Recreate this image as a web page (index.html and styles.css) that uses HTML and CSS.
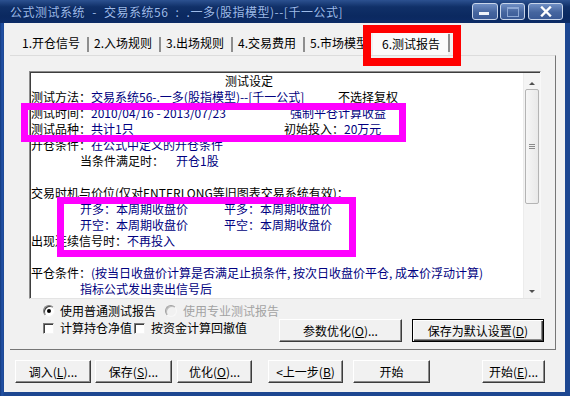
FILE: index.html
```html
<!DOCTYPE html>
<html lang="zh-CN">
<head>
<meta charset="utf-8">
<title>公式测试系统</title>
<link rel="stylesheet" href="styles.css">
</head>
<body>
<div class="window">
  <div class="titlebar">
    <span class="title">公式测试系统 - 交易系统56 : .一多(股指模型)--[千一公式]</span>
    <div class="caption-btns">
      <span class="cbtn min"><span class="min-glyph"></span></span>
      <span class="cbtn max"><span class="max-glyph"></span></span>
      <span class="cbtn close">
        <svg width="12" height="11" viewBox="0 0 12 11"><path d="M2 1.5 L10 9.5 M10 1.5 L2 9.5" stroke="#ffffff" stroke-width="2.4" stroke-linecap="square"/></svg>
      </span>
    </div>
  </div>
  <div class="client">
    <div class="tabs">
      <span class="tab">1.开仓信号</span><span class="sep"></span>
      <span class="tab">2.入场规则</span><span class="sep"></span>
      <span class="tab">3.出场规则</span><span class="sep"></span>
      <span class="tab">4.交易费用</span><span class="sep"></span>
      <span class="tab t5">5.市场模型</span>
      <span class="tab sel">6.测试报告</span><span class="sep sel-sep"></span>
    </div>
    <div class="panel">
      <div class="report">
        <div class="report-text">
          <div class="line"><span class="head">测试设定</span></div>
          <div class="line"><span class="cell w307">测试方法：<span class="v">交易系统56-.一多(股指模型)--[千一公式]</span></span>不选择复权</div>
          <div class="line"><span class="cell w259">测试时间：<span class="v">2010/04/16 - 2013/07/23</span></span><span class="v">强制平仓计算收益</span></div>
          <div class="line"><span class="cell w253">测试品种：<span class="v">共计1只</span></span>初始投入：<span class="v">20万元</span></div>
          <div class="line">开仓条件：<span class="v">在公式中定义的开仓条件</span></div>
          <div class="line indent"><span class="cell w96">当条件满足时：</span><span class="v">开仓1股</span></div>
          <div class="line"></div>
          <div class="line">交易时机与价位(仅对ENTERLONG等旧图表交易系统有效)：</div>
          <div class="line indent v"><span class="cell w144">开多：本周期收盘价</span>平多：本周期收盘价</div>
          <div class="line indent v"><span class="cell w144">开空：本周期收盘价</span>平空：本周期收盘价</div>
          <div class="line">出现连续信号时：<span class="v">不再投入</span></div>
          <div class="line"></div>
          <div class="line">平仓条件：<span class="v">(按当日收盘价计算是否满足止损条件, 按次日收盘价平仓, 成本价浮动计算)</span></div>
          <div class="line indent v">指标公式发出卖出信号后</div>
        </div>
        <div class="vscroll">
          <div class="sb-btn up"><span class="arrow-up"></span></div>
          <div class="thumb"><span class="grip"></span></div>
          <div class="track"></div>
          <div class="sb-btn down"><span class="arrow-down"></span></div>
        </div>
      </div>
      <div class="options">
        <div class="opt-left">
          <div class="opt-row">
            <span class="radio checked"></span><span class="opt-label">使用普通测试报告</span>
            <span class="radio disabled"></span><span class="opt-label dis">使用专业测试报告</span>
          </div>
          <div class="opt-row second">
            <span class="check"></span><span class="opt-label">计算持仓净值</span>
            <span class="check c2"></span><span class="opt-label">按资金计算回撤值</span>
          </div>
        </div>
        <button class="btn b-param">参数优化(<u>O</u>)...</button>
        <button class="btn b-default">保存为默认设置(<u>D</u>)</button>
      </div>
    </div>
    <div class="footer">
      <button class="btn f1">调入(<u>L</u>)...</button>
      <button class="btn f2">保存(<u>S</u>)...</button>
      <button class="btn f3">优化(<u>O</u>)...</button>
      <button class="btn f4">&lt;上一步(<u>B</u>)</button>
      <button class="btn f5">开始</button>
      <button class="btn f6">开始(<u>E</u>)...</button>
    </div>
  </div>
  <div class="mark red"></div>
  <div class="mark pink p1"></div>
  <div class="mark pink p2"></div>
</div>
</body>
</html>
```
FILE: styles.css
```css
* { box-sizing: border-box; }
html, body { margin: 0; padding: 0; }
body {
  width: 570px;
  height: 396px;
  overflow: hidden;
  font-family: "Noto Sans CJK SC", "Noto Sans", sans-serif;
  font-size: 12px;
  color: #000;
  background: #fff;
}

.window {
  position: relative;
  width: 570px;
  height: 396px;
  display: flex;
  flex-direction: column;
  background: linear-gradient(90deg, #163a7c, #2152a8 2px, #1d4791 4px);
}

/* title bar */
.titlebar {
  height: 23px;
  display: flex;
  align-items: flex-start;
  padding-left: 10px;
  background: linear-gradient(#2c5190, #103068 30%, #0b2960 70%, #0c2b66);
  color: #9dbbea;
}
.title {
  flex: 1;
  font-size: 12px;
  line-height: 14px;
  margin-top: 5px;
  white-space: pre;
  letter-spacing: 0.5px;
  word-spacing: 4px;
  text-shadow: 0 0 1px #0a1f4a;
}
.caption-btns {
  display: flex;
  margin-top: 3px;
  margin-right: 7px;
}
.cbtn {
  height: 17px;
  border: 1px solid #c8d5ea;
  border-radius: 3px;
  background: linear-gradient(#6f8ec4, #45659f 55%, #3a5a96);
  display: flex;
  align-items: center;
  justify-content: center;
}
.cbtn.min { width: 26px; align-items: flex-end; padding-bottom: 4px; }
.cbtn.max { width: 25px; margin-left: 2px; }
.cbtn.close { width: 35px; margin-left: 3px; }
.min-glyph { width: 10px; height: 3px; background: #eef3fa; margin-right: 2px; }
.max-glyph { width: 12px; height: 10px; border: 1px solid #8ea8d4; border-top-width: 2px; }

/* client */
.client {
  flex: 1;
  margin: 0 5px 4px 4px;
  background: #f1f1f1;
  padding-top: 8px;
  display: flex;
  flex-direction: column;
}

.tabs {
  display: flex;
  align-items: flex-start;
  height: 24px;
  padding-left: 18px;
}
.tab {
  height: 24px;
  width: 65px;
  display: flex;
  align-items: center;
  white-space: nowrap;
  line-height: 14px;
}
.tab.t5 { width: 63px; }
.tab.sel {
  width: 75px;
  height: 25px;
  padding-left: 9px;
  background: #fbfbfb;
}
.sep {
  width: 2px;
  height: 15px;
  margin: 6px 5px 0 0;
  background: #8e8e8e;
}
.sel-sep { height: 18px; margin-top: 3px; }

/* tab page */
.panel {
  height: 295px;
  margin-left: 6px;
  margin-right: 9px;
  border-top: 1px solid #dcdcdc;
  border-right: 1px solid #767676;
  border-bottom: 1px solid #767676;
  padding: 15px 0 0 19px;
  display: flex;
  flex-direction: column;
}

.report {
  width: 512px;
  height: 228px;
  display: flex;
  background: #fff;
  border: 1px solid;
  border-color: #8c8c8c #f8f8f8 #e4e4e4 #8c8c8c;
  box-shadow: inset 1px 1px 0 #3e3e3e;
}
.report-text {
  flex: 1;
  padding: 1px 0 0 1px;
  overflow: hidden;
}
.line {
  height: 16px;
  line-height: 16px;
  white-space: nowrap;
  display: flex;
}
.line.indent { padding-left: 49px; }
.head { margin-left: 194px; }
.cell { display: inline-block; flex: none; }
.w307 { width: 307px; }
.w259 { width: 259px; }
.w253 { width: 253px; }
.w96 { width: 96px; }
.w144 { width: 144px; }
.v { color: #000080; }

/* scrollbar */
.vscroll {
  width: 17px;
  margin-top: 1px;
  background: #f4f4f4;
  border-left: 1px solid #ececec;
  display: flex;
  flex-direction: column;
}
.sb-btn {
  height: 16px;
  display: flex;
  justify-content: center;
  align-items: center;
}
.sb-btn.up { padding-top: 4px; }
.sb-btn.down { padding-top: 2px; }
.arrow-up {
  width: 0; height: 0;
  border-left: 3px solid transparent;
  border-right: 3px solid transparent;
  border-bottom: 3px solid #505050;
}
.arrow-down {
  width: 0; height: 0;
  border-left: 3px solid transparent;
  border-right: 3px solid transparent;
  border-top: 3px solid #505050;
}
.thumb {
  height: 115px;
  margin: 0 1px;
  border: 1px solid #b4b4b4;
  border-radius: 2px;
  background: linear-gradient(90deg, #f6f6f6, #e9e9e9);
  display: flex;
  align-items: center;
  justify-content: center;
}
.grip {
  width: 6px;
  height: 5px;
  background: repeating-linear-gradient(#8a8a8a 0 1px, transparent 1px 2px);
}
.track { flex: 1; }

/* options */
.options {
  display: flex;
  margin-top: 4px;
}
.opt-left { flex: 1; padding-left: 14px; }
.opt-row {
  height: 16px;
  display: flex;
  align-items: center;
  white-space: nowrap;
}
.opt-row.second { margin-top: 1px; }
.opt-label { line-height: 16px; }
.opt-label.dis { color: #a3a3a3; }

.radio {
  width: 12px;
  height: 12px;
  border-radius: 50%;
  border: 1px solid;
  border-color: #7c7c7c #f4f4f4 #f4f4f4 #7c7c7c;
  box-shadow: inset 1px 1px 0 #3e3e3e;
  background: #fff;
  margin-right: 5px;
  display: flex;
  align-items: center;
  justify-content: center;
}
.radio.checked::after {
  content: "";
  width: 4px;
  height: 4px;
  border-radius: 50%;
  background: #000;
}
.radio.disabled {
  margin-left: 9px;
  margin-right: 6px;
  background: #f1f1f1;
  border-color: #a0a0a0 #f8f8f8 #f8f8f8 #a0a0a0;
  box-shadow: inset 1px 1px 0 #bdbdbd;
}
.check {
  width: 11px;
  height: 11px;
  background: #fff;
  border: 1px solid;
  border-color: #7c7c7c #f4f4f4 #f4f4f4 #7c7c7c;
  box-shadow: inset 1px 1px 0 #3e3e3e;
  margin-right: 6px;
}
.check.c2 { margin-left: 2px; }

/* buttons */
.btn {
  height: 23px;
  padding: 0;
  font-family: inherit;
  font-size: 12px;
  line-height: 14px;
  color: #000;
  background: #f1f1f1;
  border: 1px solid;
  border-color: #ffffff #3c3c3c #3c3c3c #ffffff;
  box-shadow: inset -1px -1px 0 #8a8a8a;
  display: flex;
  align-items: center;
  justify-content: center;
  white-space: nowrap;
}
.btn u { text-decoration-thickness: 1px; text-underline-offset: 1px; }
.b-param { width: 131px; margin-top: 16px; }
.b-default {
  width: 141px;
  margin-top: 16px;
  margin-left: 10px;
  margin-right: 11px;
  border-color: #000;
  box-shadow: inset 1px 1px 0 #ffffff, inset -1px -1px 0 #3c3c3c, inset -2px -2px 0 #8a8a8a;
}

.footer {
  display: flex;
  margin-top: 10px;
  padding-left: 11px;
}
.f1 { width: 76px; }
.f2 { width: 77px; margin-left: 4px; }
.f3 { width: 75px; margin-left: 5px; }
.f4 { width: 75px; margin-left: 16px; }
.f5 { width: 77px; margin-left: 10px; }
.f6 { width: 63px; margin-left: 52px; }

/* annotation overlays */
.mark { position: absolute; pointer-events: none; }
.red {
  left: 363px; top: 25px;
  width: 98px; height: 41px;
  border: 8px solid #ff0000;
}
.pink { border: 7px solid #ff00ff; }
.p1 { left: 21px; top: 103px; width: 385px; height: 39px; }
.p2 { left: 57px; top: 197px; width: 299px; height: 60px; }
```
